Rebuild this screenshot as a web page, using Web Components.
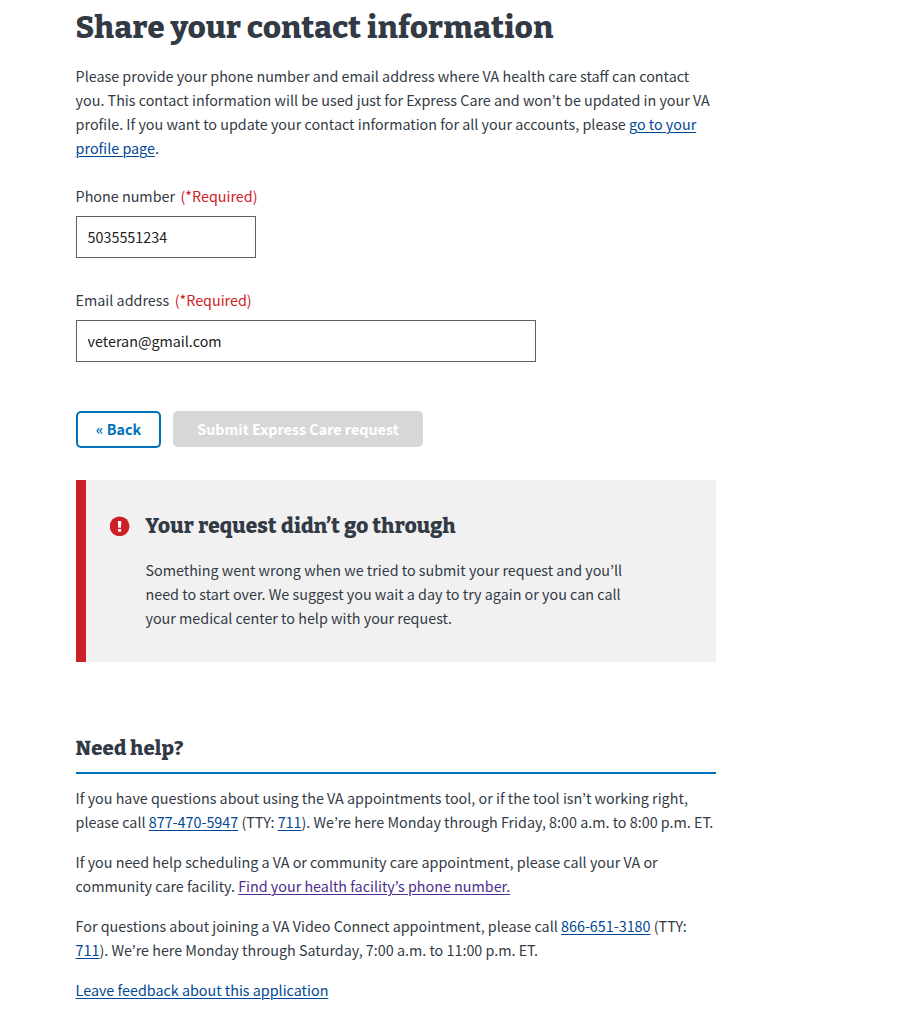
<!DOCTYPE html>
<html lang="en">
<head>
<meta charset="utf-8">
<title>Share your contact information</title>
<style>
body{margin:0;background:#fff;color:#323a45;font:14.33px/24px "Source Sans Pro","Noto Sans CJK KR",sans-serif}
</style>
</head>
<body>
<contact-page></contact-page>
<script>
const define = (name, css, html) => customElements.define(name, class extends HTMLElement {
  constructor() {
    super();
    this.attachShadow({mode: 'open'}).innerHTML = `<style>*{box-sizing:border-box}${css}</style>${html(this)}`;
  }
});
const serif = 'font-family:Bitter,"DejaVu Serif Condensed",serif;font-weight:800;white-space:nowrap;margin:0;';

define('va-link', `:host{display:inline}
a{color:var(--link,#004795);text-decoration:underline;text-decoration-thickness:1px;text-underline-offset:2px;text-decoration-skip-ink:auto}
:host([visited]){--link:#4c2c92}`, () => `<a href="#"><slot></slot></a>`);

define('va-paragraph', `:host{display:block;white-space:nowrap}p{margin:0}`, () => `<p><slot></slot></p>`);

define('va-text-input', `:host{display:block}
label{display:block}
.req{color:#cd2026;margin-left:5.5px}
input{display:block;width:var(--field-width);height:42px;margin:8px 0 0;padding:0 11px 1px;border:1px solid #5b616b;border-radius:0;background:#fff;color:#212121;font:inherit;outline:0}`,
  el => `<label for="i">${el.getAttribute('label')}<span class="req">(*Required)</span></label>
<input id="i" type="text" value="${el.getAttribute('value')}">`);

define('va-button', `:host{display:block}
button{display:block;width:var(--button-width);height:36px;padding:0;border:0;border-radius:5px;background:#d6d7d9;color:#fff;font:inherit;font-weight:700;line-height:36px;white-space:nowrap}
:host([secondary]) button{height:37px;padding-bottom:1px;background:#fff;color:#0071bb;box-shadow:inset 0 0 0 2px #0071bb}`,
  () => `<button type="button"><slot></slot></button>`);

define('va-alert', `:host{box-sizing:border-box;display:flex;width:640px;height:182px;background:#f1f1f1;border-left:10px solid #cd2026;padding:31px 0 0 24px}
svg{display:block;width:20px;height:20px;margin-top:5px;flex:none}
.body{margin-left:15.5px}
h3{${serif}font-size:20.8px;letter-spacing:.18px;word-spacing:.5px;line-height:30px;padding-top:1px}
.text{margin-top:16px}`,
  el => `<svg viewBox="0 0 20 20" aria-hidden="true"><circle cx="9.6" cy="10.3" r="9.9" fill="#cd2026"/><path d="M7.9 4.9h3.4l-.3 6.8H8.2zM8 13h3.2v2.7H8z" fill="#fff"/></svg>
<div class="body"><h3>${el.getAttribute('headline')}</h3><div class="text"><slot></slot></div></div>`);

define('va-need-help', `:host{display:block}
h2{${serif}font-size:20.3px;letter-spacing:.24px;line-height:28px;padding-bottom:10px}
.items{display:grid;gap:16px;width:640px;margin-left:.4px;padding-top:12px;border-top:2px solid #0071bb}
::slotted(*){margin-left:-.4px}`,
  () => `<h2>Need help?</h2><div class="items"><slot></slot></div>`);

define('contact-page', `:host{display:block;width:640px;padding:9px 0 0 75.6px}
h1{${serif}font-size:31px;letter-spacing:.32px;line-height:38px}
.intro{margin-top:17px}
.phone{--field-width:180px;margin-top:24px}
.email{--field-width:460px;margin-top:30px}
.actions{display:flex;align-items:flex-start;gap:12px;margin-top:49px;margin-left:.4px}
.back{--button-width:85px}.submit{--button-width:250px}
va-alert{margin:32px 0 0 .4px}
va-need-help{margin-top:72px}`, () => `
<h1>Share your contact information</h1>
<va-paragraph class="intro">Please provide your phone number and email address where VA health care staff can contact<br>you. This contact information will be used just for Express Care and won’t be updated in your VA<br>profile. If you want to update your contact information for all your accounts, please <va-link>go to your<br>profile page</va-link>.</va-paragraph>
<va-text-input class="phone" label="Phone number" value="5035551234"></va-text-input>
<va-text-input class="email" label="Email address" value="veteran@gmail.com"></va-text-input>
<div class="actions"><va-button class="back" secondary>« Back</va-button><va-button class="submit">Submit Express Care request</va-button></div>
<va-alert headline="Your request didn’t go through"><va-paragraph>Something went wrong when we tried to submit your request and you’ll<br>need to start over. We suggest you wait a day to try again or you can call<br>your medical center to help with your request.</va-paragraph></va-alert>
<va-need-help>
<va-paragraph>If you have questions about using the VA appointments tool, or if the tool isn’t working right,<br>please call <va-link>877-470-5947</va-link> (TTY: <va-link>711</va-link>). We’re here Monday through Friday, 8:00 a.m. to 8:00 p.m. ET.</va-paragraph>
<va-paragraph>If you need help scheduling a VA or community care appointment, please call your VA or<br>community care facility. <va-link visited>Find your health facility’s phone number.</va-link></va-paragraph>
<va-paragraph>For questions about joining a VA Video Connect appointment, please call <va-link>866-651-3180</va-link> (TTY:<br><va-link>711</va-link>). We’re here Monday through Saturday, 7:00 a.m. to 11:00 p.m. ET.</va-paragraph>
<va-paragraph><va-link>Leave feedback about this application</va-link></va-paragraph>
</va-need-help>`);
</script>
</body>
</html>
